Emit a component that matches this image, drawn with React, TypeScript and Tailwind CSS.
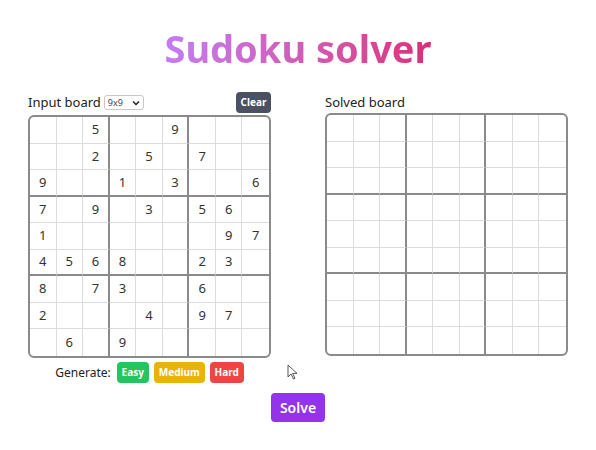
import React from "react";

const puzzle: string[] = [
  "..5..9...",
  "..2.5.7..",
  "9..1.3..6",
  "7.9.3.56.",
  "1......97",
  "4568..23.",
  "8.73..6..",
  "2...4.97.",
  ".6.9.....",
];

function Board({ rows }: { rows: string[] }) {
  return (
    <div className="w-[243px] h-[243px] border-2 border-[#8a8a8a] rounded-[6px] overflow-hidden grid grid-cols-9 grid-rows-9 bg-white">
      {rows.map((row, r) =>
        row.split("").map((ch, c) => {
          const right =
            c === 8 ? "" : c % 3 === 2 ? "border-r-2 border-r-[#8a8a8a]" : "border-r border-r-[#dcdcdc]";
          const bottom =
            r === 8 ? "" : r % 3 === 2 ? "border-b-2 border-b-[#8a8a8a]" : "border-b border-b-[#dcdcdc]";
          return (
            <div
              key={`${r}-${c}`}
              className={`flex items-center justify-center text-[13px] text-[#333] ${right} ${bottom}`}
            >
              {ch === "." ? "" : ch}
            </div>
          );
        })
      )}
    </div>
  );
}

export default function App() {
  const empty = Array.from({ length: 9 }, () => ".........");
  return (
    <div
      className="relative w-[596px] h-[450px] bg-white text-[#222] overflow-hidden"
      style={{ fontFamily: '"Noto Sans", "Open Sans", sans-serif' }}
    >
      <h1 className="pt-[22px] text-center text-[38px] leading-[52px] font-bold">
        <span className="bg-gradient-to-r from-[#c27cf6] to-[#dc2b78] bg-clip-text text-transparent">
          Sudoku solver
        </span>
      </h1>
      <div className="flex justify-center gap-[54px] mt-[18px]">
        <div className="flex flex-col">
          <div className="flex items-center h-[21px] mb-[2px]">
            <span className="text-[13px] leading-none">Input board</span>
            <div className="ml-[3px] flex items-center justify-between w-[40px] h-[15px] border border-[#c8c8c8] rounded-[3px] px-[3px] text-[9px] text-[#444]">
              <span>9x9</span>
              <svg width="8" height="6" viewBox="0 0 8 6">
                <path d="M1 1.5 L4 4.5 L7 1.5" fill="none" stroke="#222" strokeWidth="1.5" />
              </svg>
            </div>
            <button className="ml-auto h-[21px] w-[35px] rounded-[4px] bg-[#4a5160] text-white text-[10px] font-bold">
              Clear
            </button>
          </div>
          <Board rows={puzzle} />
          <div className="flex items-center justify-center gap-[5px] mt-[4px]">
            <span className="text-[12px] mr-[1px]">Generate:</span>
            <button className="h-[21px] w-[32px] rounded-[4px] bg-[#22c55e] text-white text-[10px] font-bold">
              Easy
            </button>
            <button className="h-[21px] w-[51px] rounded-[4px] bg-[#eab308] text-white text-[10px] font-bold">
              Medium
            </button>
            <button className="h-[21px] w-[34px] rounded-[4px] bg-[#ef4444] text-white text-[10px] font-bold">
              Hard
            </button>
          </div>
        </div>
        <div className="flex flex-col">
          <div className="h-[21px] flex items-center">
            <span className="text-[13px] leading-none">Solved board</span>
          </div>
          <Board rows={empty} />
        </div>
      </div>
      <div className="flex justify-center mt-[10px]">
        <button className="w-[54px] h-[29px] rounded-[4px] bg-[#9333ea] text-white text-[14px] font-semibold">
          Solve
        </button>
      </div>
      <svg className="absolute left-[287px] top-[364px]" width="12" height="16" viewBox="0 0 12 16">
        <path d="M1 1 L1 13 L4 10 L6.5 15 L8 14.3 L5.6 9.4 L10 9.4 Z" fill="white" stroke="#555" strokeWidth="1" />
      </svg>
    </div>
  );
}
